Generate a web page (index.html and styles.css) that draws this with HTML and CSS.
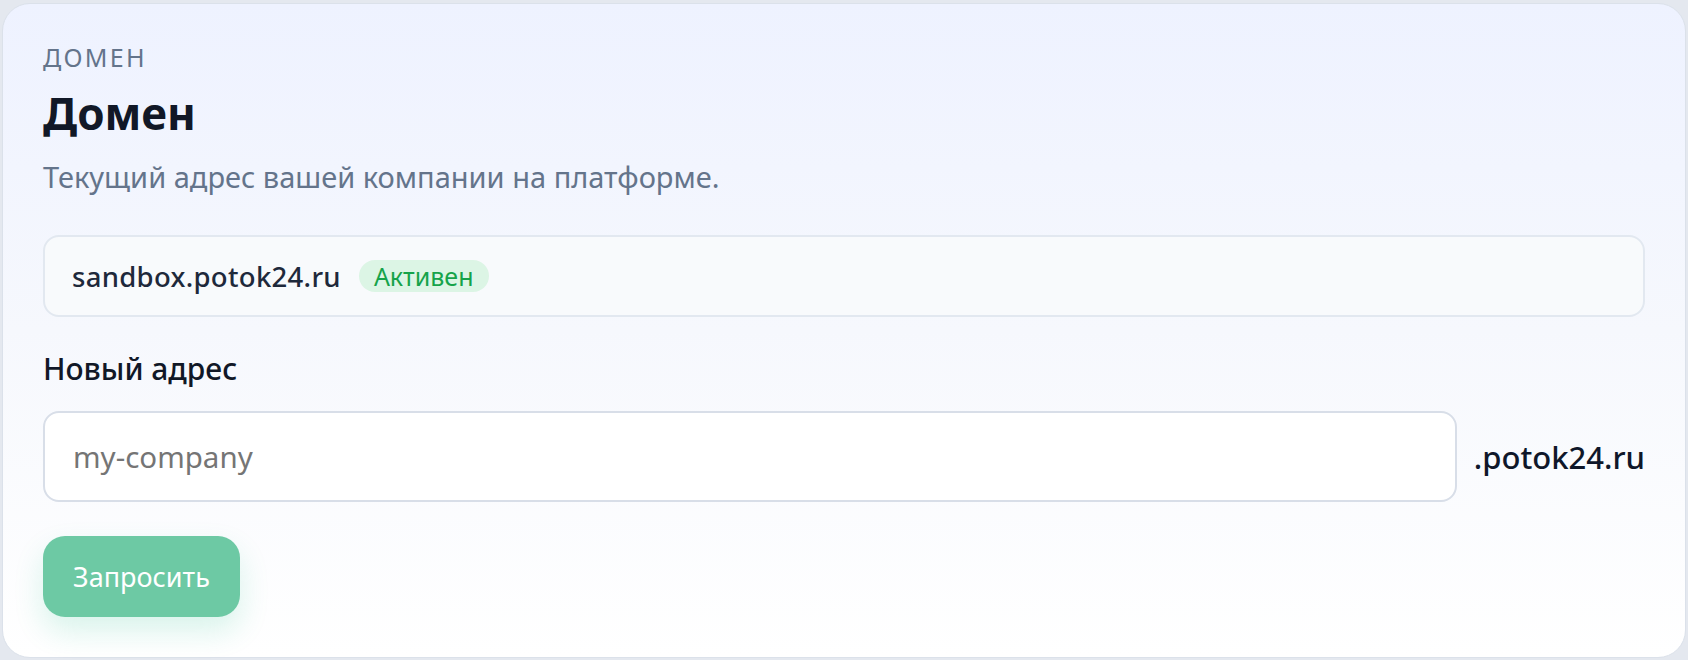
FILE: index.html
```html
<!DOCTYPE html>
<html lang="ru">
<head>
<meta charset="utf-8">
<title>Домен</title>
<link rel="stylesheet" href="styles.css">
</head>
<body>
<section class="card">
  <div class="eyebrow">Домен</div>
  <h1 class="title">Домен</h1>
  <p class="subtitle">Текущий адрес вашей компании на платформе.</p>
  <div class="current">
    <span class="current-domain">sandbox.potok24.ru</span>
    <span class="badge">Активен</span>
  </div>
  <label class="field-label" for="subdomain">Новый адрес</label>
  <div class="field-row">
    <input class="field-input" id="subdomain" type="text" placeholder="my-company">
    <span class="field-suffix">.potok24.ru</span>
  </div>
  <button class="submit" type="button">Запросить</button>
</section>
</body>
</html>
```
FILE: styles.css
```css
html {
  background: #e4e8ef;
}
body {
  margin: 0;
  padding: 3px 2px 2px 2px;
  font-family: "Noto Sans", "Open Sans", sans-serif;
}
.card {
  display: flex;
  flex-direction: column;
  align-items: flex-start;
  box-sizing: border-box;
  border: 1px solid #dbe1ea;
  border-radius: 28px;
  background: linear-gradient(180deg, #eef2ff 0%, #f6f8fd 50%, #ffffff 100%);
  padding: 36px 40px 40px 40px;
}
.eyebrow {
  font-size: 25px;
  line-height: 35px;
  font-weight: 400;
  letter-spacing: 2.3px;
  text-transform: uppercase;
  color: #64748b;
}
.title {
  margin: 12px 0 0 0;
  font-size: 44px;
  line-height: 52px;
  font-weight: 700;
  color: #111827;
}
.subtitle {
  margin: 16px 0 0 0;
  font-size: 29px;
  line-height: 44px;
  font-weight: 400;
  color: #64748b;
}
.current {
  margin-top: 36px;
  align-self: stretch;
  box-sizing: border-box;
  height: 82px;
  display: flex;
  align-items: center;
  gap: 18px;
  padding: 0 27px;
  border: 2px solid #e2e8f0;
  border-radius: 16px;
  background: #f8fafc;
}
.current-domain {
  font-size: 27.5px;
  font-weight: 500;
  color: #1e293b;
  letter-spacing: 0.3px;
}
.badge {
  font-size: 25px;
  line-height: 32px;
  font-weight: 400;
  color: #16a34a;
  background: #dcf5e5;
  border-radius: 999px;
  padding: 0 15px;
}
.field-label {
  margin-top: 31px;
  font-size: 30px;
  line-height: 42px;
  font-weight: 500;
  color: #111827;
}
.field-row {
  margin-top: 21px;
  align-self: stretch;
  display: flex;
  align-items: center;
  gap: 17px;
}
.field-input {
  flex: 1;
  min-width: 0;
  box-sizing: border-box;
  height: 91px;
  margin: 0;
  padding: 0 28px;
  border: 2px solid #d8dee8;
  border-radius: 16px;
  background: #ffffff;
  font-family: inherit;
  font-size: 29.5px;
  color: #111827;
  outline: none;
}
.field-input::placeholder {
  color: #757575;
}
.field-suffix {
  font-size: 31px;
  font-weight: 500;
  color: #0f172a;
}
.submit {
  margin-top: 34px;
  box-sizing: border-box;
  width: 197px;
  height: 81px;
  padding: 0;
  border: none;
  border-radius: 22px;
  background: #6dc9a4;
  color: #ffffff;
  font-family: inherit;
  font-size: 27px;
  font-weight: 400;
  box-shadow: 0 14px 30px rgba(16, 185, 129, 0.16);
  cursor: pointer;
}
```
